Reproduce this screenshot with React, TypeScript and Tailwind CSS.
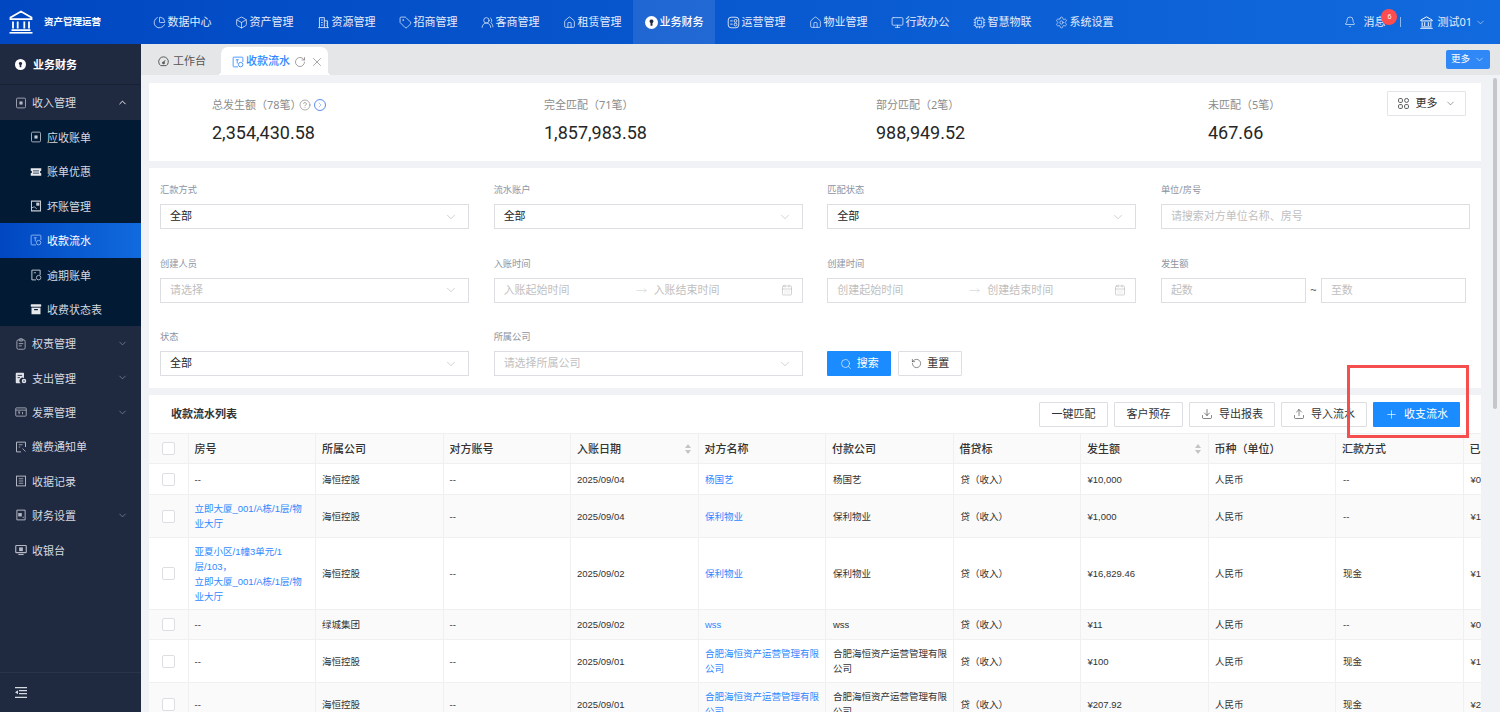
import type { ReactNode } from 'react';
import {
  Bell,
  Box,
  CalendarDays,
  ChartPie,
  ChevronDown,
  ChevronUp,
  CircleHelp,
  Cpu,
  Download,
  House,
  Monitor,
  MoveRight,
  Plus,
  RotateCw,
  Search,
  Settings,
  Tag,
  Upload,
  UsersRound,
  X,
} from 'lucide-react';

const Svg = ({ size = 14, children }: { size?: number; children: ReactNode }) => (
  <svg width={size} height={size} viewBox="0 0 16 16" fill="none" stroke="currentColor" strokeWidth="1.1" className="shrink-0">
    {children}
  </svg>
);

const Bank = ({ size = 24 }: { size?: number }) => (
  <svg width={size} height={size} viewBox="0 0 24 24" fill="none" stroke="currentColor" strokeWidth="1.8" className="shrink-0">
    <path d="M12 1.5 1.5 7.5v1.6h21V7.5z" />
    <path d="M4 11.5v7M8.7 11.5v7M15.3 11.5v7M20 11.5v7M2.5 20.2h19" />
    <path d="M.5 22.8h23" strokeWidth="1.6" />
  </svg>
);

const FinanceIcon = ({ size = 13 }: { size?: number }) => (
  <svg width={size} height={size} viewBox="0 0 16 16" className="shrink-0">
    <circle cx="8" cy="8" r="8" fill="#fff" />
    <path d="M8 4.2a2.4 2.4 0 0 1 1.2 4.5V12H6.8V8.7A2.4 2.4 0 0 1 8 4.2z" fill="#1f2940" />
  </svg>
);

const DashIcon = () => (
  <Svg size={11}>
    <path d="M4 14a7 7 0 1 1 8 0z" strokeWidth="1.4" />
    <circle cx="8" cy="10" r="1.5" fill="currentColor" />
    <path d="m8 10 2.5-4" strokeWidth="1.3" />
  </Svg>
);

const DocIcon = () => (
  <Svg size={12}>
    <rect x="2" y="1.5" width="12" height="13" rx="1.5" />
    <rect x="6.5" y="6.5" width="3" height="3" fill="currentColor" />
  </Svg>
);
const CouponIcon = () => (
  <svg width="12" height="12" viewBox="0 0 16 16" className="shrink-0">
    <path d="M1 3h14v3.4a1.6 1.6 0 0 0 0 3.2V13H1V9.6a1.6 1.6 0 0 0 0-3.2z" fill="#e6e8ec" />
    <path d="M4 6.5h8M4 9.5h8" stroke="#021a33" strokeWidth="1" />
  </svg>
);
const BadDebtIcon = () => (
  <Svg size={12}>
    <path d="M14 14.5H2v-13h12z" strokeWidth="1.4" />
    <path d="M2 10.5 6 9l3 3" />
    <rect x="9" y="4" width="3" height="3" fill="currentColor" />
  </Svg>
);
const ReceiptIcon = () => (
  <Svg size={12}>
    <path d="M8 14.5H2.5a1 1 0 0 1-1-1v-11a1 1 0 0 1 1-1h11a1 1 0 0 1 1 1V8" />
    <path d="M5 5h4M7 5v5" />
    <circle cx="11.5" cy="11.5" r="3" />
  </Svg>
);
const OverdueIcon = () => (
  <Svg size={12}>
    <path d="M8 14.5H2.5v-13h11V8" strokeWidth="1.3" />
    <path d="M5 5h3" />
    <circle cx="11.5" cy="11.5" r="3" />
  </Svg>
);
const BoxFilledIcon = () => (
  <svg width="12" height="12" viewBox="0 0 16 16" className="shrink-0">
    <rect x="1" y="1.5" width="14" height="3.5" rx="1" fill="#e6e8ec" />
    <path d="M2 6.2h12V15H2z" fill="#e6e8ec" />
    <rect x="5.5" y="8" width="5" height="1.6" fill="#021a33" />
  </svg>
);
const ClipIcon = () => (
  <Svg size={12}>
    <rect x="2.5" y="2.5" width="11" height="12.5" rx="2" />
    <rect x="5.5" y="1" width="5" height="3" rx="1" />
    <path d="M5 7.5h6M5 10.5h4" />
  </Svg>
);
const PayIcon = () => (
  <svg width="12" height="12" viewBox="0 0 16 16" className="shrink-0">
    <path d="M2 1h9a1 1 0 0 1 1 1v6a4 4 0 0 0-4 7H2a1 1 0 0 1-1-1V2a1 1 0 0 1 1-1z" fill="#dfe2e8" />
    <path d="M3.5 4.5h6M3.5 7.5h3" stroke="#1f2940" strokeWidth="1.2" />
    <circle cx="12" cy="12" r="3" fill="#dfe2e8" />
    <circle cx="12" cy="12" r="1" fill="#1f2940" />
  </svg>
);
const InvoiceIcon = () => (
  <Svg size={12}>
    <rect x="1" y="2.5" width="14" height="11" rx="1" />
    <path d="M1 5.5h14M4 8h3M5.5 8v3M10 8v3" />
  </Svg>
);
const NoticeIcon = () => (
  <Svg size={12}>
    <path d="M14 8V1.5H2v13h6" strokeWidth="1.3" />
    <path d="M5 5h5M5 8h2" />
    <path d="m10 10 4 4" />
  </Svg>
);
const RecordIcon = () => (
  <Svg size={12}>
    <rect x="2" y="1.5" width="12" height="13" strokeWidth="1.3" />
    <path d="M5 5h6M5 8h6M5 11h6" />
  </Svg>
);
const SettingDocIcon = () => (
  <Svg size={12}>
    <path d="M13.5 14.5h-11v-13h11z" strokeWidth="1.3" />
    <rect x="5" y="6" width="3.4" height="3.4" fill="currentColor" />
    <path d="M10 11h2" />
  </Svg>
);
const CashierIcon = () => (
  <svg width="12" height="12" viewBox="0 0 16 16" className="shrink-0">
    <rect x="1" y="2" width="14" height="9.5" rx="1" fill="none" stroke="currentColor" strokeWidth="1.5" />
    <rect x="5.5" y="4.5" width="5" height="5" fill="currentColor" />
    <path d="M4.5 14h7" stroke="currentColor" strokeWidth="1.5" />
  </svg>
);
const BuildingIcon = () => (
  <Svg size={13}>
    <path d="M3 14V2h6v12M9 6h4v8M1.5 14.3h13M5 5h2M5 8h2M5 11h2M11 9h.8M11 11.5h.8" />
  </Svg>
);
const OpsIcon = () => (
  <Svg size={13}>
    <rect x="1.5" y="1.5" width="13" height="13" rx="3.5" />
    <circle cx="10.5" cy="6" r="1.7" />
    <circle cx="10.5" cy="10.5" r="1.7" />
    <path d="M4 6h3M4 10h3" />
  </Svg>
);

const navItems: { label: string; icon: ReactNode; active?: boolean }[] = [
  { label: '数据中心', icon: <ChartPie size={13} strokeWidth={1.4} /> },
  { label: '资产管理', icon: <Box size={13} strokeWidth={1.4} /> },
  { label: '资源管理', icon: <BuildingIcon /> },
  { label: '招商管理', icon: <Tag size={13} strokeWidth={1.4} /> },
  { label: '客商管理', icon: <UsersRound size={13} strokeWidth={1.4} /> },
  { label: '租赁管理', icon: <House size={13} strokeWidth={1.4} /> },
  { label: '业务财务', icon: <FinanceIcon />, active: true },
  { label: '运营管理', icon: <OpsIcon /> },
  { label: '物业管理', icon: <House size={13} strokeWidth={1.3} /> },
  { label: '行政办公', icon: <Monitor size={13} strokeWidth={1.4} /> },
  { label: '智慧物联', icon: <Cpu size={13} strokeWidth={1.4} /> },
  { label: '系统设置', icon: <Settings size={13} strokeWidth={1.2} /> },
];

const subItems: { label: string; icon: ReactNode; active?: boolean }[] = [
  { label: '应收账单', icon: <DocIcon /> },
  { label: '账单优惠', icon: <CouponIcon /> },
  { label: '坏账管理', icon: <BadDebtIcon /> },
  { label: '收款流水', icon: <ReceiptIcon />, active: true },
  { label: '逾期账单', icon: <OverdueIcon /> },
  { label: '收费状态表', icon: <BoxFilledIcon /> },
];

const sideItems: { label: string; icon: ReactNode; arrow?: boolean }[] = [
  { label: '权责管理', icon: <ClipIcon />, arrow: true },
  { label: '支出管理', icon: <PayIcon />, arrow: true },
  { label: '发票管理', icon: <InvoiceIcon />, arrow: true },
  { label: '缴费通知单', icon: <NoticeIcon /> },
  { label: '收据记录', icon: <RecordIcon /> },
  { label: '财务设置', icon: <SettingDocIcon />, arrow: true },
  { label: '收银台', icon: <CashierIcon /> },
];

const stats = [
  { label: '总发生额（78笔）', value: '2,354,430.58', help: true },
  { label: '完全匹配（71笔）', value: '1,857,983.58' },
  { label: '部分匹配（2笔）', value: '988,949.52' },
  { label: '未匹配（5笔）', value: '467.66' },
];

const columns = [
  { label: '房号' },
  { label: '所属公司' },
  { label: '对方账号' },
  { label: '入账日期', sort: true },
  { label: '对方名称' },
  { label: '付款公司' },
  { label: '借贷标' },
  { label: '发生额', sort: true },
  { label: '币种（单位）' },
  { label: '汇款方式' },
  { label: '已匹配金额' },
];

const rows = [
  { h: 'h-[31px]', room: ['--'], company: '海恒控股', date: '2025/09/04', name: '杨国艺', amount: '¥10,000', way: '--', matched: '¥0' },
  { h: 'h-[43px]', room: ['立即大厦_001/A栋/1层/物业大厅'], company: '海恒控股', date: '2025/09/04', name: '保利物业', amount: '¥1,000', way: '--', matched: '¥1,000' },
  { h: 'h-[72px]', room: ['亚夏小区/1幢3单元/1层/103，', '立即大厦_001/A栋/1层/物业大厅'], company: '海恒控股', date: '2025/09/02', name: '保利物业', amount: '¥16,829.46', way: '现金', matched: '¥16,829.46' },
  { h: 'h-[30px]', room: ['--'], company: '绿城集团', date: '2025/09/02', name: 'wss', amount: '¥11', way: '--', matched: '¥0' },
  { h: 'h-[43px]', room: ['--'], company: '海恒控股', date: '2025/09/01', name: '合肥海恒资产运营管理有限公司', amount: '¥100', way: '现金', matched: '¥100' },
  { h: 'h-[43px]', room: ['--'], company: '海恒控股', date: '2025/09/01', name: '合肥海恒资产运营管理有限公司', amount: '¥207.92', way: '现金', matched: '¥207.92' },
];

function Field({ label, children }: { label: string; children: ReactNode }) {
  return (
    <div className="flex flex-col">
      <div className="h-[15px] mb-[7px] text-[9.25px] leading-[15px] text-[#8c93a3]">{label}</div>
      {children}
    </div>
  );
}

function Select({ value, placeholder }: { value?: string; placeholder?: string }) {
  return (
    <div className="h-[25px] flex items-center justify-between pl-[9px] pr-[10px] bg-white border border-[#dcdee2] text-[11px]">
      <span className={value ? 'text-[#262626]' : 'text-[#bfbfbf]'}>{value ?? placeholder}</span>
      <ChevronDown size={14} strokeWidth={0.9} className="text-[#a8a8a8]" />
    </div>
  );
}

function DateRange({ from, to }: { from: string; to: string }) {
  return (
    <div className="h-[25px] flex items-center pl-[9px] pr-[9px] bg-white border border-[#dcdee2] text-[11px] text-[#bfbfbf]">
      <span className="w-[132px]">{from}</span>
      <MoveRight size={11} strokeWidth={1} className="mr-[7px]" />
      <span className="flex-1">{to}</span>
      <CalendarDays size={12} strokeWidth={1} className="text-[#a8a8a8]" />
    </div>
  );
}

function ToolButton({ label, icon, width }: { label: string; icon?: ReactNode; width: string }) {
  return (
    <button className={`${width} h-[25px] flex items-center justify-center gap-[6px] bg-white border border-[#dcdee2] rounded-[1px] text-[11px] text-[#333]`}>
      {icon}
      {label}
    </button>
  );
}

const SortIcon = () => (
  <svg width="6" height="10" viewBox="0 0 6 10" className="absolute right-[7px] top-1/2 -translate-y-1/2">
    <path d="M3 0 6 4H0z" fill="#c4c4c4" />
    <path d="M3 10 0 6h6z" fill="#c4c4c4" />
  </svg>
);

const Checkbox = () => <span className="block mx-auto w-[13px] h-[13px] bg-white border border-[#dcdee2] rounded-[2px]" />;

export default function App() {
  return (
    <div className="relative h-[712px] w-[1500px] overflow-hidden flex flex-col bg-[#f0f2f5] font-['Noto_Sans','Noto_Sans_CJK_SC',sans-serif]">
      {/* top bar */}
      <header className="h-[44px] shrink-0 flex items-center text-[#e3ecfb] bg-[linear-gradient(90deg,#0047c1,#116ade)]">
        <div className="w-[141px] h-full shrink-0 flex items-center pl-[9px] gap-[11px] text-white">
          <Bank size={24} />
          <span className="text-[9.5px] font-bold">资产管理运营</span>
        </div>
        {navItems.map((it) => (
          <div key={it.label} className={`w-[82px] h-full shrink-0 flex items-center justify-center gap-[2px] text-[11px] ${it.active ? 'bg-white/10 text-white font-medium' : ''}`}>
            {it.icon}
            <span>{it.label}</span>
          </div>
        ))}
        <div className="flex-1" />
        <div className="relative flex items-center text-[11px]">
          <Bell size={12} strokeWidth={1.4} className="mr-[7px]" />
          <span>消息</span>
          <span className="absolute left-[37px] -top-[5px] w-4 h-4 rounded-full bg-[#ff4d4f] text-white text-[7px] flex items-center justify-center">6</span>
          <span className="ml-[15px] w-px h-[10px] bg-[#8fb5ee]" />
          <span className="ml-[19px] text-white"><Bank size={13} /></span>
          <span className="ml-[4px]">测试01</span>
          <ChevronDown size={11} strokeWidth={1.2} className="ml-[2.5px] mr-[14.5px]" />
        </div>
      </header>

      <div className="flex-1 flex min-h-0">
        {/* sidebar */}
        <aside className="w-[141px] shrink-0 flex flex-col bg-[#1f2940] text-[#d5d9e0] text-[11px]">
          <div className="h-[41px] flex items-center pl-[15px] gap-[7px] font-bold text-white border-b border-[#182033]">
            <FinanceIcon size={11} />
            <span className="pt-[2px]">业务财务</span>
          </div>
          <div className="h-[35px] flex items-center pl-[15px] pr-[13px] gap-[5px]">
            <span className="text-[#b4b9c4]"><DocIcon /></span>
            <span className="flex-1 pt-[2px]">收入管理</span>
            <ChevronUp size={11} strokeWidth={2} className="text-white" />
          </div>
          <div className="bg-[#021a33]">
            {subItems.map((it) => (
              <div key={it.label} className={`h-[34.4px] flex items-center pl-[30px] gap-[5px] ${it.active ? 'bg-[linear-gradient(90deg,#0047c1,#116ade)] text-white' : ''}`}>
                <span className={`w-[12px] flex justify-center ${it.active ? 'text-[#9cc0f5]' : 'text-[#c6cad2]'}`}>{it.icon}</span>
                <span className="pt-[2px]">{it.label}</span>
              </div>
            ))}
          </div>
          {sideItems.map((it) => (
            <div key={it.label} className="h-[34.4px] shrink-0 flex items-center pl-[15px] pr-[13px] gap-[5px]">
              <span className="w-[12px] flex justify-center text-[#b4b9c4]">{it.icon}</span>
              <span className="flex-1 pt-[2px]">{it.label}</span>
              {it.arrow && <ChevronDown size={11} strokeWidth={1.5} className="text-[#8a91a0]" />}
            </div>
          ))}
          <div className="flex-1" />
          <div className="h-[40px] flex items-center pl-[15px] border-t border-[#293349]">
            <svg width="12" height="11" viewBox="0 0 12 11" className="text-[#d5d9e0]" fill="currentColor">
              <path d="M0 0h12v1.2H0zM4 3h8v1.2H4zM4 6h8v1.2H4zM0 9.8h12V11H0zM3 3.2v4L0 5.2z" />
            </svg>
          </div>
        </aside>

        {/* main */}
        <main className="relative flex-1 min-w-0 flex flex-col">
          <div className="h-[31px] shrink-0 flex bg-[#e5e6e8] text-[11px]">
            <div className="w-[80px] flex items-center pl-[17px] pt-[3px] gap-[4px] text-[#555]">
              <DashIcon />
              <span>工作台</span>
            </div>
            <div className="relative w-[107px] mt-[3px] flex items-center pl-[11px] pt-[1px] rounded-t-[7px] bg-white text-[#2f88ff] font-medium before:absolute before:bottom-0 before:-left-1 before:w-1 before:h-1 before:bg-[radial-gradient(circle_at_0_0,transparent_4px,white_4px)] after:absolute after:bottom-0 after:-right-1 after:w-1 after:h-1 after:bg-[radial-gradient(circle_at_100%_0,transparent_4px,white_4px)]">
              <ReceiptIcon />
              <span className="ml-[2px]">收款流水</span>
              <RotateCw size={12} strokeWidth={1.2} className="ml-[3.5px] text-[#666]" />
              <X size={14} strokeWidth={1.1} className="ml-[4px] text-[#777]" />
            </div>
            <div className="flex-1" />
            <div className="mt-[6px] mr-[10px] w-[44px] h-[19px] flex items-center justify-center gap-[4px] rounded-[2px] bg-[#2f88f5] text-white text-[9.5px]">
              更多
              <ChevronDown size={11} strokeWidth={1.2} />
            </div>
          </div>

          <div className="flex-1 min-h-0 flex flex-col gap-[7px] pt-2 pl-2 pr-[19px]">
            {/* totals */}
            <section className="h-[78px] shrink-0 flex bg-white pl-[63px] pt-[8px] pr-[15px]">
              {stats.map((s, i) => (
                <div key={s.label} className={i === 3 ? 'flex-1 pt-[6px]' : 'w-[332px] shrink-0 pt-[6px]'}>
                  <div className="flex items-center h-[16px] text-[11px] text-[#8c8c8c]">
                    <span className={s.help ? '-mr-[3px]' : ''}>{s.label}</span>
                    {s.help && (
                      <>
                        <CircleHelp size={12} strokeWidth={1.2} className="text-[#777]" />
                        <span className="ml-[3px] w-[12px] h-[12px] rounded-full border border-[#5b8def] text-[#5b8def] flex items-center justify-center">
                          <ChevronDown size={8} strokeWidth={1.5} className="-rotate-90" />
                        </span>
                      </>
                    )}
                  </div>
                  <div className="mt-[7px] font-['Roboto','Noto_Sans',sans-serif] text-[18px] leading-[26px] text-[#262626]">{s.value}</div>
                </div>
              ))}
              <button className="w-[79px] h-[25px] flex items-center justify-center gap-[7px] border border-[#e3e4e8] rounded-[1px] text-[11px] text-[#333]">
                <svg width="11" height="11" viewBox="0 0 10 10" fill="none" stroke="#555" strokeWidth="0.9">
                  <rect x="0.5" y="0.5" width="3.5" height="3.5" rx="1" />
                  <circle cx="7.8" cy="2.2" r="1.8" />
                  <rect x="0.5" y="6" width="3.5" height="3.5" rx="1" />
                  <rect x="6" y="6" width="3.5" height="3.5" rx="1" />
                </svg>
                更多
                <ChevronDown size={11} strokeWidth={1.2} className="text-[#555]" />
              </button>
            </section>

            {/* filters */}
            <section className="h-[220px] shrink-0 bg-white pt-[14px] px-[11px] grid grid-cols-4 gap-x-[24.5px] gap-y-[26.5px] content-start">
              <Field label="汇款方式"><Select value="全部" /></Field>
              <Field label="流水账户"><Select value="全部" /></Field>
              <Field label="匹配状态"><Select value="全部" /></Field>
              <Field label="单位/房号">
                <div className="h-[25px] flex items-center pl-[9px] bg-white border border-[#dcdee2] text-[11px] text-[#bfbfbf]">请搜索对方单位名称、房号</div>
              </Field>
              <Field label="创建人员"><Select placeholder="请选择" /></Field>
              <Field label="入账时间"><DateRange from="入账起始时间" to="入账结束时间" /></Field>
              <Field label="创建时间"><DateRange from="创建起始时间" to="创建结束时间" /></Field>
              <Field label="发生额">
                <div className="flex items-center text-[11px] text-[#bfbfbf]">
                  <div className="w-[145px] h-[25px] flex items-center pl-[9px] border border-[#dcdee2]">起数</div>
                  <span className="w-[15px] text-center text-[#555]">~</span>
                  <div className="w-[145px] h-[25px] flex items-center pl-[9px] border border-[#dcdee2]">至数</div>
                </div>
              </Field>
              <Field label="状态"><Select value="全部" /></Field>
              <Field label="所属公司"><Select placeholder="请选择所属公司" /></Field>
              <div className="pt-[22px] flex gap-[7px] text-[11px]">
                <button className="w-[64px] h-[25px] flex items-center justify-center gap-[5px] bg-[#1a8cff] text-white rounded-[1px]">
                  <Search size={12} strokeWidth={1.2} />
                  搜索
                </button>
                <button className="w-[64px] h-[25px] flex items-center justify-center gap-[5px] bg-white border border-[#dcdee2] rounded-[1px] text-[#333]">
                  <RotateCw size={11} strokeWidth={1.2} className="-scale-x-100" />
                  重置
                </button>
              </div>
            </section>

            {/* list */}
            <section className="flex-1 min-h-0 bg-white overflow-hidden">
              <div className="h-[38px] flex items-center pl-[22px] pr-[21px]">
                <div className="flex-1 text-[11px] font-bold text-[#333]">收款流水列表</div>
                <div className="flex gap-[6px]">
                  <ToolButton label="一键匹配" width="w-[69px]" />
                  <ToolButton label="客户预存" width="w-[69px]" />
                  <ToolButton label="导出报表" width="w-[86px]" icon={<Download size={12} strokeWidth={1.2} />} />
                  <ToolButton label="导入流水" width="w-[86px]" icon={<Upload size={12} strokeWidth={1.2} />} />
                  <button className="w-[87px] h-[25px] flex items-center justify-center gap-[6px] bg-[#1a8cff] text-white rounded-[1px] text-[11px]">
                    <Plus size={13} strokeWidth={1.2} />
                    收支流水
                  </button>
                </div>
              </div>
              <table className="table-fixed w-[1441.5px] border-collapse font-['Liberation_Sans','Noto_Sans_CJK_SC',sans-serif] text-[9.5px] leading-[15px] text-[#333]">
                <colgroup>
                  <col className="w-[39px]" />
                  {columns.map((c) => (
                    <col key={c.label} className="w-[127.5px]" />
                  ))}
                </colgroup>
                <thead>
                  <tr className="h-[30px] bg-[#fafafa] font-['Noto_Sans','Noto_Sans_CJK_SC',sans-serif] text-[11px] text-[#333] border-y border-[#f0f0f0]">
                    <th className="border-r border-[#f0f0f0]"><Checkbox /></th>
                    {columns.map((c) => (
                      <th key={c.label} className="relative pl-[6px] font-medium text-left border-r border-[#f0f0f0]">
                        {c.label}
                        {c.sort && <SortIcon />}
                      </th>
                    ))}
                  </tr>
                </thead>
                <tbody>
                  {rows.map((r, i) => (
                    <tr key={i} className={`${r.h} border-b border-[#f0f0f0] ${i % 2 === 1 ? 'bg-[#fafafa]' : 'bg-white'}`}>
                      <td className="border-r border-[#f0f0f0]"><Checkbox /></td>
                      <td className="pl-[6px] pr-[7px] border-r border-[#f0f0f0]">
                        {r.room.map((line) => (
                          <div key={line} className={line === '--' ? '' : 'text-[#2f88ff]'}>{line}</div>
                        ))}
                      </td>
                      <td className="pl-[6px] pr-[7px] border-r border-[#f0f0f0]">{r.company}</td>
                      <td className="pl-[6px] pr-[7px] border-r border-[#f0f0f0]">--</td>
                      <td className="pl-[6px] pr-[7px] border-r border-[#f0f0f0]">{r.date}</td>
                      <td className="pl-[6.5px] pr-[4px] border-r border-[#f0f0f0] text-[#2f88ff]">{r.name}</td>
                      <td className="pl-[7px] pr-[4px] border-r border-[#f0f0f0]">{r.name}</td>
                      <td className="pl-[7px] pr-[7px] border-r border-[#f0f0f0]">贷（收入）</td>
                      <td className="pl-[6.5px] pr-[7px] border-r border-[#f0f0f0]">{r.amount}</td>
                      <td className="pl-[6.5px] pr-[7px] border-r border-[#f0f0f0]">人民币</td>
                      <td className="pl-[7px] pr-[7px] border-r border-[#f0f0f0]">{r.way}</td>
                      <td className="pl-[7px] whitespace-nowrap">{r.matched}</td>
                    </tr>
                  ))}
                </tbody>
              </table>
            </section>
          </div>

          {/* scrollbar thumb */}
          <div className="absolute right-[3px] top-[34px] w-[4px] h-[331px] rounded-full bg-[#c4c6ca]" />
        </main>
      </div>

      {/* red annotation box */}
      <div className="absolute left-[1347px] top-[365px] w-[122px] h-[73px] border-[3px] border-[#f44e4e]" />
    </div>
  );
}
